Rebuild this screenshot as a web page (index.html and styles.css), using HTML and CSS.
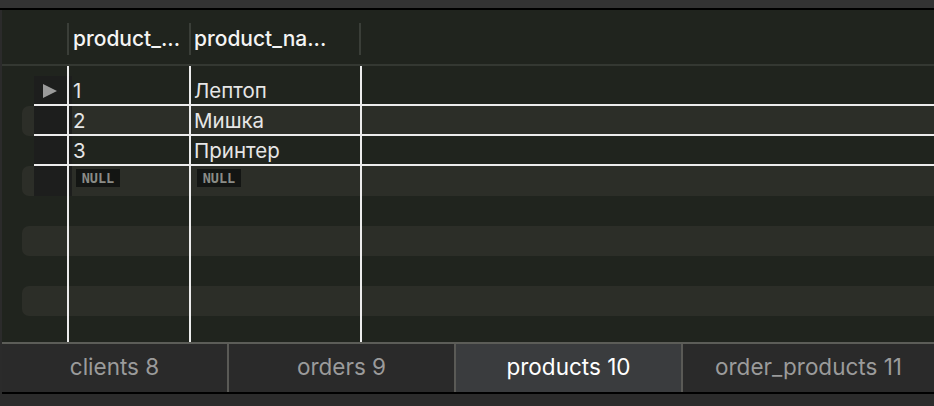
FILE: index.html
```html
<!DOCTYPE html>
<html>
<head>
<meta charset="utf-8">
<link rel="stylesheet" href="styles.css">
</head>
<body>
<div class="app">
  <div class="topbar"></div>
  <div class="grid">
    <div class="head">
      <div class="hrh"></div>
      <div class="hsep"></div>
      <div class="hc c1">product_...</div>
      <div class="hsep"></div>
      <div class="hc c2">product_na...</div>
      <div class="hsep"></div>
    </div>
    <div class="body">
      <div class="row data">
        <div class="rh"><div class="rhbox"><span class="tri"></span></div></div>
        <div class="cell c1">1</div>
        <div class="cell c2">Лептоп</div>
      </div>
      <div class="row data alt">
        <div class="rh"><div class="rhbox"></div></div>
        <div class="cell c1">2</div>
        <div class="cell c2">Мишка</div>
      </div>
      <div class="row data">
        <div class="rh"><div class="rhbox"></div></div>
        <div class="cell c1">3</div>
        <div class="cell c2">Принтер</div>
      </div>
      <div class="row alt">
        <div class="rh"><div class="rhbox"></div></div>
        <div class="cell c1"><span class="null">NULL</span></div>
        <div class="cell c2"><span class="null">NULL</span></div>
      </div>
      <div class="row"></div>
      <div class="row alt"></div>
      <div class="row"></div>
      <div class="row alt"></div>
      <div class="row"></div>
      <div class="vline v1"></div>
      <div class="vline v2"></div>
      <div class="vline v3"></div>
    </div>
  </div>
  <div class="tabs">
    <div class="tab">clients 8</div>
    <div class="tab">orders 9</div>
    <div class="tab active">products 10</div>
    <div class="tab last">order_products 11</div>
  </div>
  <div class="bottom"></div>
</div>
</body>
</html>
```

FILE: styles.css
```css
* { box-sizing: border-box; }
html, body { margin: 0; padding: 0; }
body {
  width: 934px;
  height: 406px;
  overflow: hidden;
  background: #2b2b2b;
  font-family: Inter, "Liberation Sans", sans-serif;
}
.app {
  display: flex;
  flex-direction: column;
  height: 406px;
}
.topbar {
  height: 10px;
  background: #333333;
  border-bottom: 2px solid #000000;
}
.grid {
  margin-left: 2px;
  height: 332px;
  background: #20241e;
  display: flex;
  flex-direction: column;
}
.head {
  height: 56px;
  border-bottom: 2px solid #343832;
  display: flex;
  align-items: center;
  color: #f4f4f4;
  font-size: 21px;
  font-weight: 500;
}
.hrh { width: 65px; }
.hsep {
  width: 2px;
  height: 32px;
  background: #3a3e38;
  margin-top: 4px;
}
.hc { white-space: nowrap; padding-top: 3px; }
.head .c1 { width: 120px; padding-left: 4px; }
.head .c2 { width: 168px; padding-left: 3px; }
.body {
  position: relative;
  flex: 1;
  overflow: hidden;
  padding-top: 10px;
}
.row {
  position: relative;
  height: 30px;
  margin-left: 20px;
  border-radius: 7px 0 0 7px;
  display: flex;
  align-items: stretch;
  color: #e6e6e6;
  font-size: 20.5px;
}
.row.alt { background: #2c2e28; }
.row.data::after {
  content: "";
  position: absolute;
  left: 12px;
  right: 0;
  bottom: 0;
  height: 2px;
  background: #ececec;
}
.rh { width: 47px; flex: none; }
.rhbox {
  margin-left: 12px;
  width: 38px;
  height: 30px;
  background: #1d1e1d;
  display: flex;
  align-items: center;
  padding-left: 9px;
}
.tri {
  width: 0;
  height: 0;
  border-top: 7px solid transparent;
  border-bottom: 7px solid transparent;
  border-left: 14px solid #9b9b9b;
}
.cell {
  flex: none;
  display: flex;
  align-items: center;
  white-space: nowrap;
  padding-bottom: 2px;
}
.row .c1 { width: 122px; padding-left: 4px; }
.row .c2 { width: 170px; padding-left: 3px; }
.null {
  margin-left: 3px;
  width: 44px;
  height: 18px;
  background: #131513;
  color: #8a8c87;
  font-family: "DejaVu Sans Mono", monospace;
  font-weight: bold;
  font-size: 13.5px;
  display: flex;
  align-items: center;
  justify-content: center;
  margin-bottom: 4px;
}
.vline {
  position: absolute;
  top: 0;
  bottom: 0;
  width: 2px;
  background: #ececec;
}
.v1 { left: 65px; }
.v2 { left: 187px; }
.v3 { left: 358px; }
.tabs {
  margin-left: 2px;
  height: 50px;
  border-top: 2px solid #5c5d58;
  display: flex;
}
.tab {
  width: 227px;
  flex: none;
  background: #2a2a2a;
  border-right: 2px solid #5a5a56;
  color: #9b9b9b;
  font-size: 22.5px;
  display: flex;
  align-items: center;
  justify-content: center;
  padding-bottom: 3px;
}
.tab.active { background: #3a3c3e; color: #ffffff; }
.tab.last { flex: 1; border-right: 0; }
.bottom {
  margin-left: 2px;
  height: 14px;
  border-top: 2px solid #000000;
  background: #2b2b2b;
}
```
